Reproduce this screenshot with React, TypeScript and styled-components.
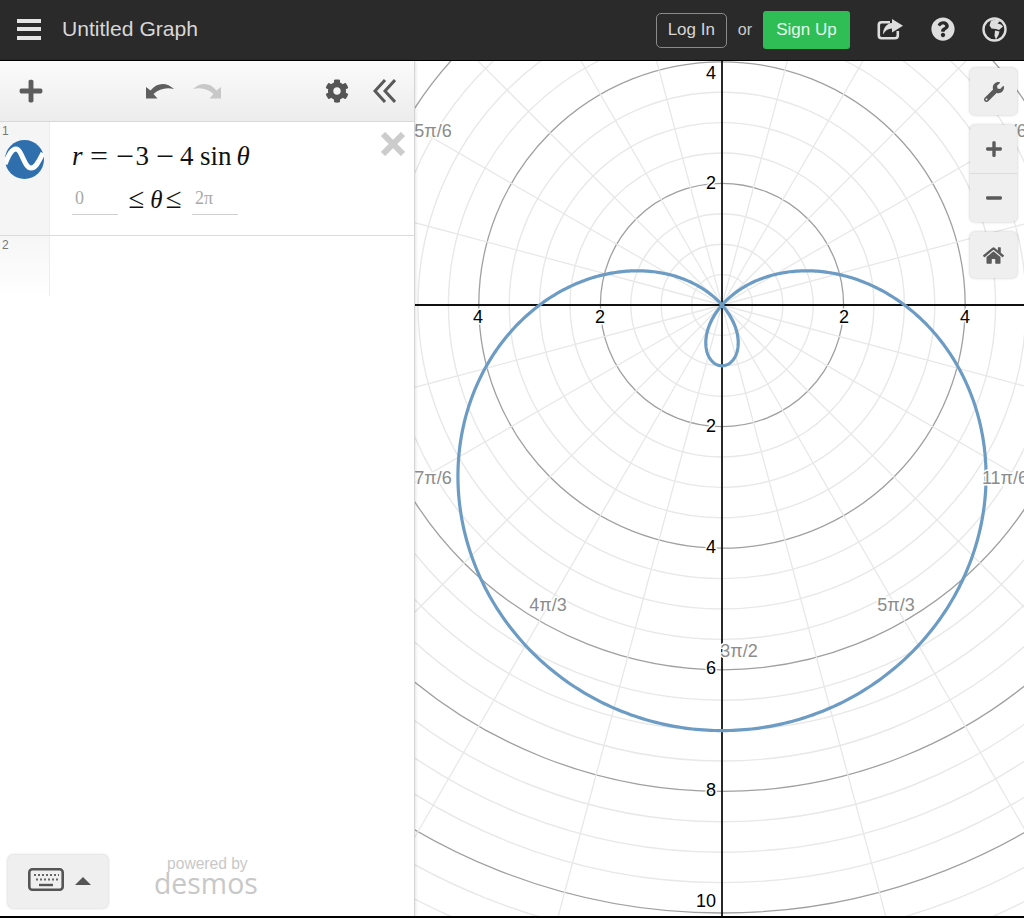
import React from "react";
import styled, { createGlobalStyle } from "styled-components";
import { FaPlus, FaMinus, FaCog, FaWrench, FaHome, FaQuestionCircle } from "react-icons/fa";

const Global = createGlobalStyle`
  html, body { margin: 0; padding: 0; background: #fff; }
  body { font-family: "Liberation Sans", Arial, sans-serif; overflow: hidden; }
`;

const Page = styled.div`
  width: 1024px; height: 918px; display: flex; flex-direction: column; overflow: hidden;
`;
const Header = styled.header`
  height: 60px; flex: none; background: #2a2a2a; border-bottom: 1px solid #000;
  display: flex; align-items: center; color: #ddd;
`;
const Hamburger = styled.div`
  width: 24px; margin: 0 0 2px 17px; display: flex; flex-direction: column; gap: 4.5px;
  & > i { display: block; height: 4px; background: #e4e4e4; }
`;
const Title = styled.div`
  margin: 0 0 2px 21px; font-size: 21.1px; color: #d8d8d8; flex: 1;
`;
const LogIn = styled.div`
  width: 71px; height: 35px; border: 1px solid #8a8a8a; border-radius: 5px; display: flex; align-items: center; justify-content: center;
  font-size: 17px; color: #d6d6d6; box-sizing: border-box;
`;
const Or = styled.div` margin: 0 11px; font-size: 16px; color: #ccc; `;
const SignUp = styled.div`
  width: 87px; height: 38px; background: #2ebe55; border-radius: 3px; display: flex; align-items: center; justify-content: center;
  font-size: 17px; color: #e6f7ea;
`;
const HeaderIcons = styled.div`
  display: flex; align-items: center; margin: 0 17px 2px 27px; gap: 27.5px; color: #dedede;
  & svg { display: block; }
`;
const Body = styled.div`
  flex: 1; display: flex; min-height: 0; border-bottom: 2px solid #000;
`;
const Side = styled.aside`
  width: 414px; flex: none; border-right: 1px solid #d4d4d4; display: flex; flex-direction: column; position: relative; background: #fff; z-index: 1;
  box-shadow: 0 0 4px rgba(0,0,0,.16);
`;
const Toolbar = styled.div`
  height: 60px; flex: none; background: linear-gradient(#fbfbfb, #ececec); border-bottom: 1px solid #d8d8d8;
  display: flex; align-items: center; color: #555;
`;
const ToolPlus = styled.div` margin-left: 18px; font-size: 26px; display: flex; color: #5c5c5c; `;
const Undo = styled.svg` margin-left: 102px; display: block; flex: none; `;
const Redo = styled.svg` margin-left: 19px; display: block; flex: none; `;
const Gear = styled.div` margin-left: 104px; font-size: 24px; display: flex; color: #555; `;
const Collapse = styled.svg` margin-left: 24px; display: block; flex: none; `;
const Row = styled.div`
  display: flex; flex: none; height: ${(p: { $h: number }) => p.$h}px;
`;
const Gutter = styled.div`
  width: 50px; flex: none; border-right: 1px solid #ededed; background: ${(p: { $fade?: boolean }) => p.$fade ? "linear-gradient(#f6f6f6, #fff)" : "#f5f5f5"};
  font-size: 12px; color: #777; padding: 2px 0 0 2px; box-sizing: border-box; position: relative;
`;
const Logo = styled.svg` position: absolute; left: 5px; top: 18px; `;
const Expr = styled.div`
  flex: 1; padding: 17px 0 0 22px; position: relative; font-family: "Liberation Serif", "Times New Roman", serif; color: #111;
`;
const Formula = styled.div` display: flex; align-items: baseline; font-size: 27px; line-height: 34px; white-space: nowrap; `;
const Sym = styled.span<{ $ml?: number; $size?: number; $it?: boolean }>`
  margin-left: ${(p) => p.$ml ?? 0}px;
  font-size: ${(p) => (p.$size ? `${p.$size}px` : "inherit")};
  font-style: ${(p) => (p.$it ? "italic" : "normal")};
`;
const Op = styled.span<{ $ml: number }>`
  display: inline-block; margin-left: ${(p) => p.$ml}px; width: 18px;
  transform: scaleX(1.18); transform-origin: left center;
`;
const Domain = styled.div` display: flex; align-items: flex-start; margin-top: 11px; `;
const Bound = styled.div`
  width: 46px; height: 31px; border-bottom: 1px solid #cfcfcf; color: #a9a9a9; font-size: 18px; line-height: 28px; padding-left: 3px; box-sizing: border-box;
`;
const DomainText = styled.div`
  width: 74px; display: flex; align-items: baseline; justify-content: center; font-size: 25px; line-height: 28px; white-space: nowrap;
`;
const Close = styled.svg` position: absolute; top: 10px; right: 9px; `;
const Divider = styled.div` height: 1px; background: #dcdcdc; flex: none; `;
const Footer = styled.div`
  margin-top: auto; height: 61px; flex: none; display: flex; align-items: flex-start; padding-left: 8px;
`;
const KeyBtn = styled.div`
  width: 100px; height: 53px; background: #efefef; border-radius: 5px; box-shadow: 0 0 3px rgba(0,0,0,.25);
  display: flex; align-items: center; color: #555; box-sizing: border-box; padding-left: 20px; gap: 11px;
`;
const KeyIcon = styled.svg` display: block; flex: none; margin-bottom: 5px; `;
const KeyCaret = styled.svg` display: block; flex: none; margin-bottom: 1px; `;
const Powered = styled.div`
  margin-left: 46px; margin-top: 1px; display: flex; flex-direction: column; align-items: center; color: #c8c8c8;
`;
const PoweredBy = styled.span` font-size: 15.6px; line-height: 16px; margin-left: 3px; `;
const Brand = styled.span` font-size: 28.4px; line-height: 23px; font-family: "Open Sans", sans-serif; `;
const Graph = styled.main` flex: 1; position: relative; overflow: hidden; background: #fff; `;
const Plot = styled.svg` position: absolute; left: 0; top: 0; `;
const Controls = styled.div`
  position: absolute; right: 7px; top: 7px; display: flex; flex-direction: column; gap: 10px;
`;
const CtrlGroup = styled.div`
  width: 47px; background: #efefef; border-radius: 5px; box-shadow: 0 0 3px rgba(0,0,0,.25); display: flex; flex-direction: column;
`;
const Ctrl = styled.div<{ $h?: number }>`
  height: ${(p) => p.$h ?? 47}px; box-sizing: border-box; display: flex; align-items: center; justify-content: center; color: #5a5a5a; font-size: 18px;
  & + & { border-top: 1px solid #dcdcdc; }
`;

const CX = 307, CY = 244, U = 60.8;
const radii: number[] = [];
for (let r = 0.5; r <= 14; r += 0.5) radii.push(r);
const spokes: number[] = [];
for (let a = 0; a < 360; a += 15) if (a % 90 !== 0) spokes.push(a);

const curve = (() => {
  const pts: string[] = [];
  for (let i = 0; i <= 720; i++) {
    const t = (i / 720) * 2 * Math.PI;
    const r = -3 - 4 * Math.sin(t);
    pts.push(`${(CX + r * Math.cos(t) * U).toFixed(2)},${(CY - r * Math.sin(t) * U).toFixed(2)}`);
  }
  return pts.join(" ");
})();

const yLabels: [string, number][] = [["4", 18], ["2", 128], ["2", 371], ["4", 492], ["6", 613], ["8", 735], ["10", 846]];
const xLabels: [string, number][] = [["4", 63], ["2", 185], ["2", 429], ["4", 550]];
const angLabels: [string, number, number][] = [
  ["5π/6", 18, 76], ["π/6", 598, 76], ["7π/6", 18, 423], ["11π/6", 590, 423], ["4π/3", 133, 550], ["5π/3", 481, 550], ["3π/2", 324, 596],
];
const numFont = "'Liberation Sans', Arial, sans-serif";

export default function App() {
  return (
    <Page>
      <Global />
      <Header>
        <Hamburger><i /><i /><i /></Hamburger>
        <Title>Untitled Graph</Title>
        <LogIn>Log In</LogIn>
        <Or>or</Or>
        <SignUp>Sign Up</SignUp>
        <HeaderIcons>
          <svg width="26" height="21" viewBox="0 0 26 21">
            <path d="M13 3.2H4.5Q1.8 3.2 1.8 6V16.5Q1.8 19.2 4.5 19.2H18Q20.8 19.2 20.8 16.5V12" fill="none" stroke="#dedede" strokeWidth="2.6" />
            <path d="M15 0L26 6.8L15 13.5V9.5C11 9.5 8 11.5 6 15.5C6 9 9.5 4.5 15 4Z" fill="#dedede" />
          </svg>
          <FaQuestionCircle size={24} />
          <svg width="25" height="25" viewBox="0 0 25 25">
            <circle cx="12.5" cy="12.5" r="11" fill="none" stroke="#dedede" strokeWidth="2.4" />
            <path d="M9 3.5L15 2.5L18 4L15.5 6.5L19 7.5L21 9.5L17 13L14 12L9.5 11.5L7.5 8.5Z" fill="#dedede" />
            <path d="M13 13.5L17.5 14.5L16.5 18L14 22.5L12.5 19Z" fill="#dedede" />
          </svg>
        </HeaderIcons>
      </Header>
      <Body>
        <Side>
          <Toolbar>
            <ToolPlus><FaPlus /></ToolPlus>
            <Undo width="28" height="16" viewBox="0 0 28 16">
              <path d="M0 4V15.5H11.5L7.5 11C13 6 20 4 28 6C21 -1 11 -1 4.5 7.5Z" fill="#5e5e5e" />
            </Undo>
            <Redo width="28" height="16" viewBox="0 0 28 16">
              <path d="M28 4V15.5H16.5L20.5 11C15 6 8 4 0 6C7 -1 17 -1 23.5 7.5Z" fill="#c8c8c8" />
            </Redo>
            <Gear><FaCog /></Gear>
            <Collapse width="23" height="24" viewBox="0 0 23 24" fill="none" stroke="#5a5a5a" strokeWidth="3">
              <path d="M12 1L2 12L12 23" />
              <path d="M22 1L12 12L22 23" />
            </Collapse>
          </Toolbar>
          <Row $h={113}>
            <Gutter>
              1
              <Logo width="39" height="39" viewBox="0 0 39 39">
                <circle cx="19.5" cy="19.5" r="19.5" fill="#2f6fae" />
                <path d="M0 24C4 14 7 9 11 9C17 9 19 28 26 28C31 28 34 21 38 13" fill="none" stroke="#fff" strokeWidth="5" />
              </Logo>
            </Gutter>
            <Expr>
              <Formula>
                <Sym $it>r</Sym>
                <Op $ml={7}>=</Op>
                <Op $ml={8}>−</Op>
                <Sym $ml={2}>3</Sym>
                <Op $ml={6.5}>−</Op>
                <Sym $ml={6.5}>4</Sym>
                <Sym $ml={6.5}>sin</Sym>
                <Sym $ml={5} $it>θ</Sym>
              </Formula>
              <Domain>
                <Bound>0</Bound>
                <DomainText>
                  <Sym $size={29}>≤</Sym>
                  <Sym $ml={6} $it>θ</Sym>
                  <Sym $ml={3} $size={29}>≤</Sym>
                </DomainText>
                <Bound>2π</Bound>
              </Domain>
              <Close width="24" height="24" viewBox="0 0 24 24">
                <path d="M2 2L22 22M22 2L2 22" stroke="#ccc" strokeWidth="6" />
              </Close>
            </Expr>
          </Row>
          <Divider />
          <Row $h={60}>
            <Gutter $fade>2</Gutter>
          </Row>
          <Footer>
            <KeyBtn>
              <KeyIcon width="36" height="23" viewBox="0 0 36 23">
                <rect x="1.3" y="1.3" width="33.4" height="20.4" rx="3" fill="none" stroke="#555" strokeWidth="2.6" />
                <path d="M6 7h2M10 7h2M14 7h2M18 7h2M22 7h2M26 7h2M30 7h1M8 11.5h2M12 11.5h2M16 11.5h2M20 11.5h2M24 11.5h2M28 11.5h2" stroke="#666" strokeWidth="2" />
                <path d="M11 17h14" stroke="#555" strokeWidth="2.4" />
              </KeyIcon>
              <KeyCaret width="16" height="8" viewBox="0 0 16 8"><path d="M8 0L16 8H0Z" fill="#555" /></KeyCaret>
            </KeyBtn>
            <Powered>
              <PoweredBy>powered by</PoweredBy>
              <Brand>desmos</Brand>
            </Powered>
          </Footer>
        </Side>
        <Graph>
          <Plot width="609" height="855" viewBox="0 0 609 855">
            {radii.map((r) => (
              <circle key={r} cx={CX} cy={CY} r={r * U} fill="none"
                stroke={r % 2 === 0 ? "#a0a0a0" : "#e8e8e8"} strokeWidth={r % 2 === 0 ? 1.3 : 1.4} />
            ))}
            {spokes.map((a) => (
              <line key={a} x1={CX} y1={CY} x2={CX + 1200 * Math.cos((a * Math.PI) / 180)} y2={CY - 1200 * Math.sin((a * Math.PI) / 180)}
                stroke="#e8e8e8" strokeWidth={1.3} />
            ))}
            <line x1={0} y1={CY} x2={609} y2={CY} stroke="#111" strokeWidth={1.8} />
            <line x1={CX} y1={0} x2={CX} y2={855} stroke="#111" strokeWidth={1.8} />
            <polyline points={curve} fill="none" stroke="#6c9bc4" strokeWidth={3.2} strokeLinejoin="round" />
            {yLabels.map(([t, y], i) => (
              <text key={i} x={301} y={y} textAnchor="end" fontFamily={numFont} fontSize="18" fill="#000" stroke="#fff" strokeWidth="3" paintOrder="stroke">{t}</text>
            ))}
            {xLabels.map(([t, x], i) => (
              <text key={i} x={x} y={262} textAnchor="middle" fontFamily={numFont} fontSize="18" fill="#000" stroke="#fff" strokeWidth="3" paintOrder="stroke">{t}</text>
            ))}
            {angLabels.map(([t, x, y], i) => (
              <text key={i} x={x} y={y} textAnchor="middle" fontFamily={numFont} fontSize="18" fill="#8c8c8c" stroke="#fff" strokeWidth="3" paintOrder="stroke">{t}</text>
            ))}
          </Plot>
          <Controls>
            <CtrlGroup><Ctrl><FaWrench size={20} /></Ctrl></CtrlGroup>
            <CtrlGroup>
              <Ctrl $h={48}><FaPlus /></Ctrl>
              <Ctrl $h={49}><FaMinus /></Ctrl>
            </CtrlGroup>
            <CtrlGroup><Ctrl $h={46}><FaHome size={21} /></Ctrl></CtrlGroup>
          </Controls>
        </Graph>
      </Body>
    </Page>
  );
}
